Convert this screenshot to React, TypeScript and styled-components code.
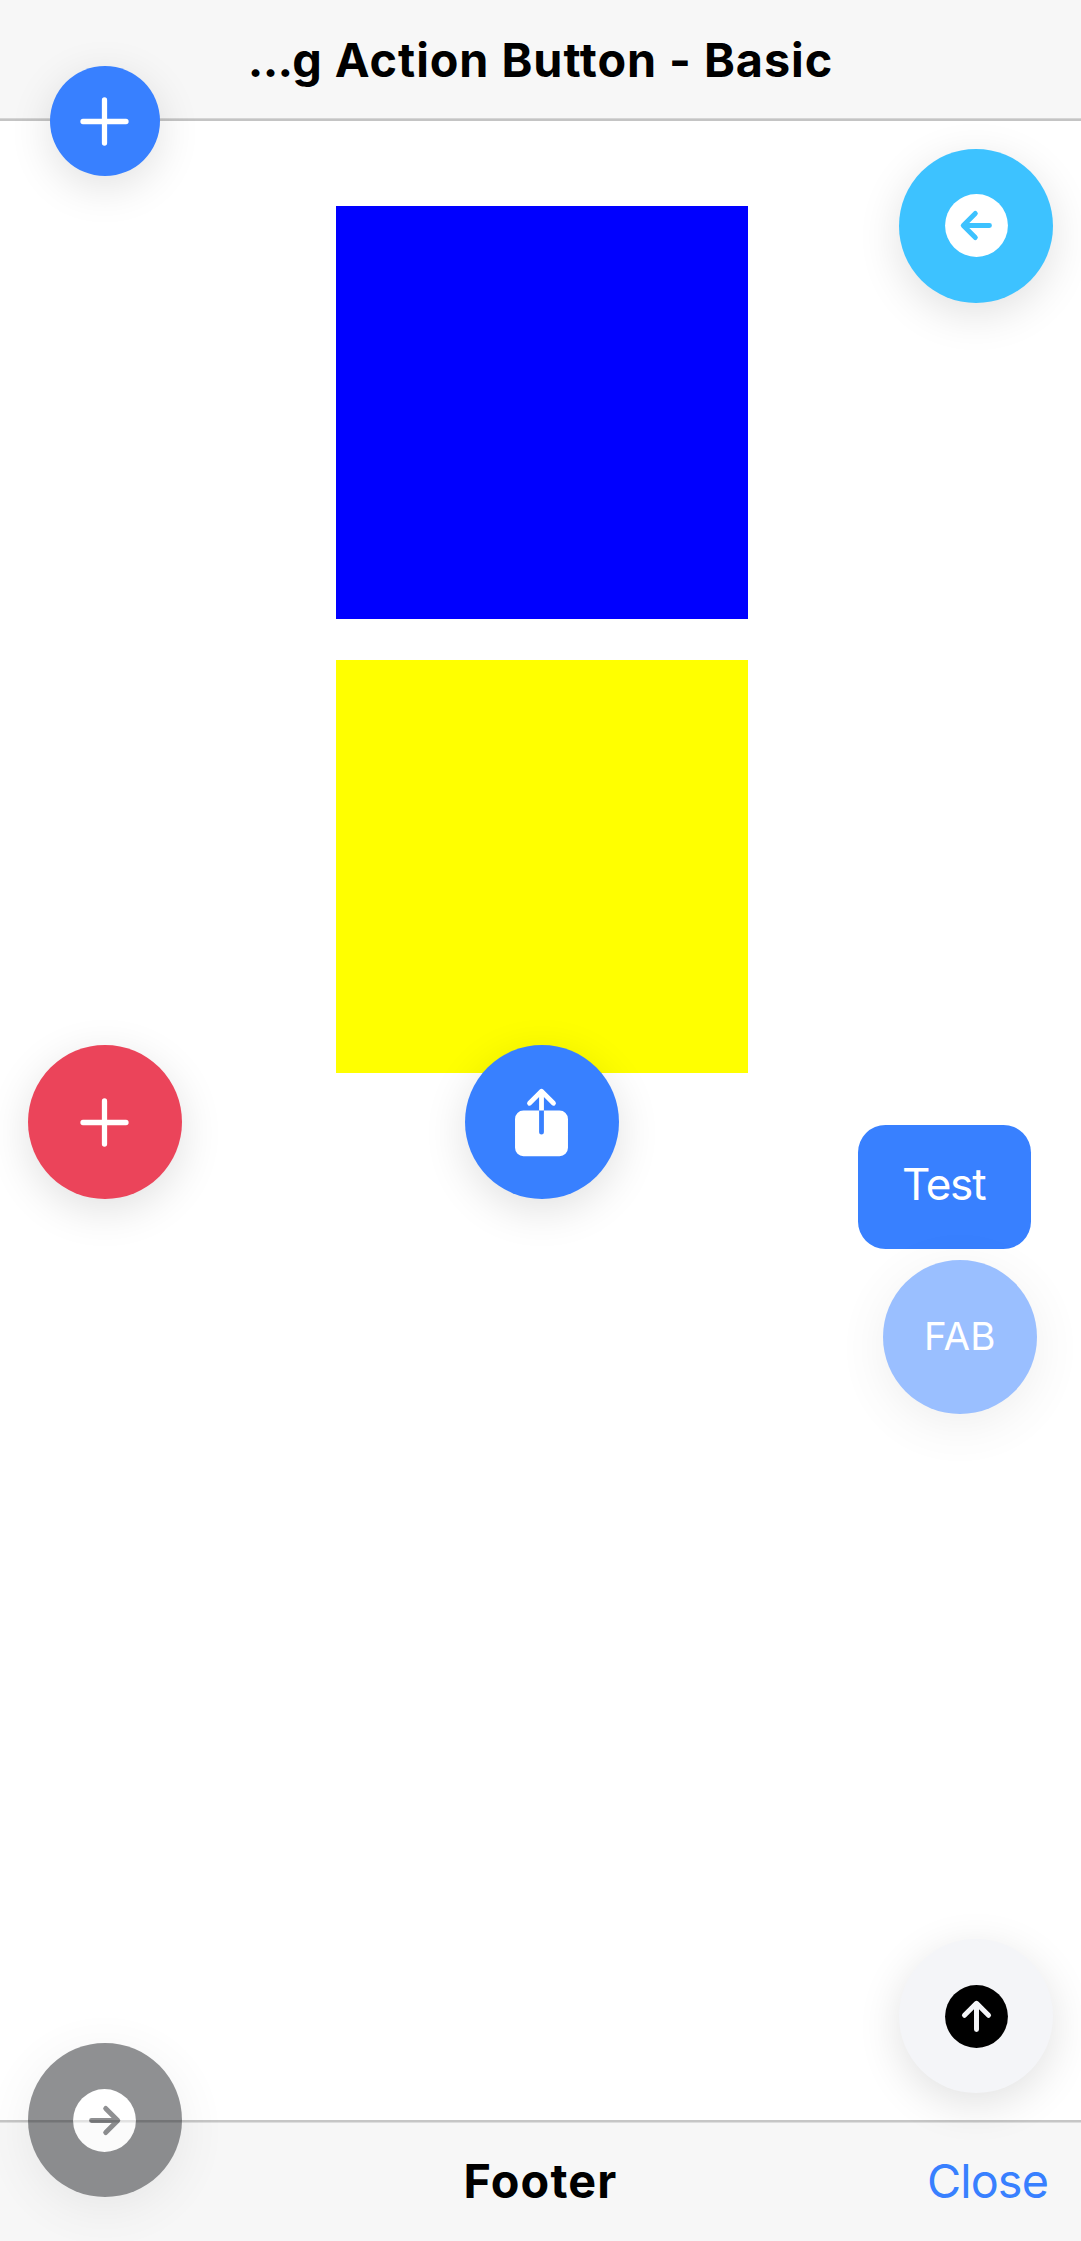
import React from "react";
import styled, { createGlobalStyle, css } from "styled-components";

const GlobalStyle = createGlobalStyle`
  *, *::before, *::after { box-sizing: border-box; }
  html, body { margin: 0; padding: 0; background: #fff; }
  body { overflow: hidden; }
  button { font-family: inherit; }
`;

const Page = styled.div`
  position: relative;
  display: flex;
  flex-direction: column;
  width: 1081px;
  height: 2241px;
  overflow: hidden;
  background: #fff;
  color: #000;
  font-family: Inter, "Liberation Sans", sans-serif;
  font-feature-settings: "calt" 0;
`;

const Toolbar = styled.header<{ $edge: "top" | "bottom" }>`
  display: grid;
  grid-template-columns: 1fr auto 1fr;
  align-items: center;
  flex: none;
  height: 121px;
  background: #f7f7f7;
  ${({ $edge }) =>
    $edge === "top"
      ? css`box-shadow: inset 0 -2px #c4c4c4, inset 0 -3px #d5d5d5;`
      : css`box-shadow: inset 0 2px #c6c6c6, inset 0 3px #dedede;`}
`;

const Title = styled.h1<{ $spacing: number }>`
  grid-column: 2;
  margin: 0;
  font-size: 46.75px;
  line-height: 56px;
  font-weight: 700;
  letter-spacing: ${({ $spacing }) => $spacing}px;
  white-space: nowrap;
`;

const HeaderTitle = styled(Title)`
  padding-bottom: 1px;
`;

const Dots = styled.span`
  letter-spacing: -0.8px;
`;

const CloseButton = styled.button`
  justify-self: end;
  margin-right: 33px;
  padding: 0;
  border: 0;
  background: none;
  color: #3880ff;
  font-size: 46.75px;
  line-height: 56px;
  font-weight: 400;
  letter-spacing: -0.9px;
`;

const Content = styled.main`
  display: flex;
  flex: 1;
  flex-direction: column;
  align-items: center;
  gap: 41.25px;
  padding: 85.25px 0 0 2.5px;
`;

const Square = styled.div<{ $color: string }>`
  flex: none;
  width: 412.5px;
  height: 412.5px;
  background: ${({ $color }) => $color};
`;

const TestButton = styled.button`
  position: absolute;
  left: 858px;
  top: 1124.75px;
  width: 173.25px;
  height: 123.75px;
  padding: 0 2px 6px 0;
  border: 0;
  border-radius: 27.5px;
  background: #3880ff;
  color: #fff;
  font-size: 44px;
  letter-spacing: -1.2px;
`;

const Fab = styled.button<{
  $x: number;
  $y: number;
  $color: string;
  $ink?: string;
  $small?: boolean;
  $disabled?: boolean;
}>`
  position: absolute;
  left: ${({ $x }) => $x}px;
  top: ${({ $y }) => $y}px;
  display: flex;
  align-items: center;
  justify-content: center;
  width: ${({ $small }) => ($small ? 110 : 154)}px;
  height: ${({ $small }) => ($small ? 110 : 154)}px;
  padding: 0;
  border: 0;
  border-radius: 50%;
  background: ${({ $color }) => $color};
  color: ${({ $ink = "#fff" }) => $ink};
  opacity: ${({ $disabled }) => ($disabled ? 0.5 : 1)};
  box-shadow: 0 11px 44px rgba(0, 0, 0, 0.12);
  font-size: 38.5px;
`;

const FabLabel = styled.span`
  padding-bottom: 1px;
  letter-spacing: 0.2px;
`;

const Icon = styled.svg.attrs({ viewBox: "0 0 512 512" })`
  display: block;
  width: 77px;
  height: 77px;
`;

function PlusIcon() {
  return (
    <Icon fill="none" stroke="currentColor" strokeWidth={35} strokeLinecap="round">
      <path d="M256 113v286M399 256H113" />
    </Icon>
  );
}

function ShareIcon() {
  return (
    <Icon fill="currentColor">
      <path d="M376 176H272v144a16 16 0 0 1-32 0V176H136a56 56 0 0 0-56 56v192a56 56 0 0 0 56 56h240a56 56 0 0 0 56-56V232a56 56 0 0 0-56-56z" />
      <path d="M272 86.63l52.69 52.68a16 16 0 0 0 22.62-22.62l-80-80a16 16 0 0 0-22.62 0l-80 80a16 16 0 0 0 22.62 22.62L240 86.63V176h32z" />
    </Icon>
  );
}

/* Filled disc with an arrow in the button's own colour; angle 0 points left. */
function ArrowDisc({ angle = 0, arrow }: { angle?: number; arrow: string }) {
  return (
    <Icon>
      <circle cx="256" cy="256" r="209" fill="currentColor" />
      <path
        d="M248 176l-80 80 80 80M342 256H174"
        transform={`rotate(${angle} 256 256)`}
        fill="none"
        stroke={arrow}
        strokeWidth={33}
        strokeLinecap="round"
        strokeLinejoin="round"
      />
    </Icon>
  );
}

export default function App() {
  return (
    <Page>
      <GlobalStyle />
      <Toolbar $edge="top">
        <HeaderTitle $spacing={0.95}><Dots>...</Dots>g Action Button - Basic</HeaderTitle>
      </Toolbar>
      <Content>
        <Square $color="#0000ff" />
        <Square $color="#ffff00" />
      </Content>
      <Toolbar as="footer" $edge="bottom">
        <Title as="h2" $spacing={1.15}>Footer</Title>
        <CloseButton>Close</CloseButton>
      </Toolbar>

      <TestButton>Test</TestButton>
      <Fab $x={49.5} $y={66} $color="#3880ff" $small aria-label="Add"><PlusIcon /></Fab>
      <Fab $x={899.25} $y={148.75} $color="#3dc2ff" aria-label="Back"><ArrowDisc arrow="#3dc2ff" /></Fab>
      <Fab $x={27.5} $y={1045} $color="#eb445a" aria-label="Add"><PlusIcon /></Fab>
      <Fab $x={464.75} $y={1045} $color="#3880ff" aria-label="Share"><ShareIcon /></Fab>
      <Fab $x={882.75} $y={1259.5} $color="#3880ff" $disabled><FabLabel>FAB</FabLabel></Fab>
      <Fab $x={899} $y={1939} $color="#f4f5f8" $ink="#000" aria-label="Up"><ArrowDisc angle={90} arrow="#f4f5f8" /></Fab>
      <Fab $x={27.5} $y={2043} $color="#222428" $disabled aria-label="Forward"><ArrowDisc angle={180} arrow="#222428" /></Fab>
    </Page>
  );
}
